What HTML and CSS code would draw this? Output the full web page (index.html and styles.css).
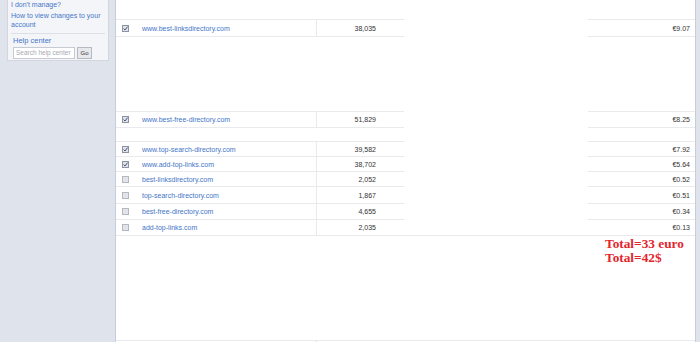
FILE: index.html
```html
<!DOCTYPE html>
<html>
<head>
<meta charset="utf-8">
<link rel="stylesheet" href="styles.css">
</head>
<body>
<div class="page">
  <div class="side">
    <div class="box">
      <a class="slink first">I don't manage?</a>
      <a class="slink">How to view changes to your account</a>
      <div class="sep"></div>
      <a class="slink help">Help center</a>
      <div class="search">
        <span class="input">Search help center</span>
        <span class="go">Go</span>
      </div>
    </div>
  </div>
  <div class="main">
    <div class="sp19"></div>
    <div class="row h18">
      <div class="left">
        <div class="cbcell"><svg class="cb" width="7" height="7" viewBox="0 0 7 7"><rect x="0.5" y="0.5" width="6" height="6" fill="#dfe2ea" stroke="#8d93a2"/><path d="M1.6 3.6 L3 5 L5.6 1.6" fill="none" stroke="#4a5570" stroke-width="1"/></svg></div>
        <a class="url">www.best-linksdirectory.com</a>
        <div class="num">38,035</div>
      </div>
      <div class="gap"></div>
      <div class="right"><span class="price">€9.07</span></div>
    </div>
    <div class="sp74"></div>
    <div class="row h17">
      <div class="left">
        <div class="cbcell"><svg class="cb" width="7" height="7" viewBox="0 0 7 7"><rect x="0.5" y="0.5" width="6" height="6" fill="#dfe2ea" stroke="#8d93a2"/><path d="M1.6 3.6 L3 5 L5.6 1.6" fill="none" stroke="#4a5570" stroke-width="1"/></svg></div>
        <a class="url">www.best-free-directory.com</a>
        <div class="num">51,829</div>
      </div>
      <div class="gap"></div>
      <div class="right"><span class="price">€8.25</span></div>
    </div>
    <div class="sp13"></div>
    <div class="row h16">
      <div class="left">
        <div class="cbcell"><svg class="cb" width="7" height="7" viewBox="0 0 7 7"><rect x="0.5" y="0.5" width="6" height="6" fill="#dfe2ea" stroke="#8d93a2"/><path d="M1.6 3.6 L3 5 L5.6 1.6" fill="none" stroke="#4a5570" stroke-width="1"/></svg></div>
        <a class="url">www.top-search-directory.com</a>
        <div class="num">39,582</div>
      </div>
      <div class="gap"></div>
      <div class="right"><span class="price">€7.92</span></div>
    </div>
    <div class="row h16 next">
      <div class="left">
        <div class="cbcell"><svg class="cb" width="7" height="7" viewBox="0 0 7 7"><rect x="0.5" y="0.5" width="6" height="6" fill="#dfe2ea" stroke="#8d93a2"/><path d="M1.6 3.6 L3 5 L5.6 1.6" fill="none" stroke="#4a5570" stroke-width="1"/></svg></div>
        <a class="url">www.add-top-links.com</a>
        <div class="num">38,702</div>
      </div>
      <div class="gap"></div>
      <div class="right"><span class="price">€5.64</span></div>
    </div>
    <div class="row h16 next">
      <div class="left">
        <div class="cbcell"><svg class="cb" width="7" height="7" viewBox="0 0 7 7"><rect x="0.5" y="0.5" width="6" height="6" fill="#e2e4e9" stroke="#b4b7c0"/></svg></div>
        <a class="url">best-linksdirectory.com</a>
        <div class="num">2,052</div>
      </div>
      <div class="gap"></div>
      <div class="right"><span class="price">€0.52</span></div>
    </div>
    <div class="row h18 next">
      <div class="left">
        <div class="cbcell"><svg class="cb" width="7" height="7" viewBox="0 0 7 7"><rect x="0.5" y="0.5" width="6" height="6" fill="#e2e4e9" stroke="#b4b7c0"/></svg></div>
        <a class="url">top-search-directory.com</a>
        <div class="num">1,867</div>
      </div>
      <div class="gap"></div>
      <div class="right"><span class="price">€0.51</span></div>
    </div>
    <div class="row h17 next">
      <div class="left">
        <div class="cbcell"><svg class="cb" width="7" height="7" viewBox="0 0 7 7"><rect x="0.5" y="0.5" width="6" height="6" fill="#e2e4e9" stroke="#b4b7c0"/></svg></div>
        <a class="url">best-free-directory.com</a>
        <div class="num">4,655</div>
      </div>
      <div class="gap"></div>
      <div class="right"><span class="price">€0.34</span></div>
    </div>
    <div class="row h17 next last">
      <div class="left">
        <div class="cbcell"><svg class="cb" width="7" height="7" viewBox="0 0 7 7"><rect x="0.5" y="0.5" width="6" height="6" fill="#e2e4e9" stroke="#b4b7c0"/></svg></div>
        <a class="url">add-top-links.com</a>
        <div class="num">2,035</div>
      </div>
      <div class="gap"></div>
      <div class="right"><span class="price">€0.13</span></div>
    </div>
    <div class="total">
      <div>Total=33 euro</div>
      <div>Total=42$</div>
    </div>
    <div class="fill"></div>
    <div class="bottom"><div class="tick"></div></div>
  </div>
  <div class="rstrip"></div>
</div>
</body>
</html>
```

FILE: styles.css
```css
* { box-sizing: border-box; }
html, body { margin: 0; padding: 0; }
body {
  width: 700px;
  height: 342px;
  overflow: hidden;
  background: #dfe3ec;
  font-family: "Liberation Sans", Arial, sans-serif;
  font-size: 7px;
}
.page {
  display: flex;
  height: 342px;
}
.side {
  width: 116px;
  flex: none;
  padding-left: 7px;
  border-right: 1px solid #c9cdd8;
}
.box {
  width: 102px;
  height: 61px;
  background: #f4f5f8;
  border: 1px solid #d3d6de;
  border-top: none;
  padding: 0 3px 0 3px;
  display: flex;
  flex-direction: column;
}
.slink {
  color: #4475c8;
  line-height: 9px;
  display: block;
}
.slink.first { margin-bottom: 2px; }
.sep {
  height: 1px;
  background: #dcdfe6;
  margin: 4px 0 2px 0;
}
.slink.help {
  font-size: 7.5px;
  padding-left: 2px;
  line-height: 10px;
}
.search {
  display: flex;
  gap: 2px;
  padding-left: 2px;
  margin-top: 1px;
}
.input {
  width: 62px;
  height: 12px;
  border: 1px solid #c7cad2;
  background: #fff;
  color: #a6a9b0;
  font-size: 6.5px;
  line-height: 10px;
  padding-left: 2px;
  white-space: nowrap;
  overflow: hidden;
}
.go {
  width: 15px;
  height: 12px;
  border: 1px solid #b6b9c1;
  background: #e7e8ec;
  color: #333;
  font-size: 6px;
  line-height: 10px;
  text-align: center;
}
.main {
  width: 579px;
  flex: none;
  background: #fff;
  display: flex;
  flex-direction: column;
}
.rstrip {
  flex: 1;
  background: #dfe3ec;
  border-left: 1px solid #c9cdd8;
}
.sp19 { height: 19px; flex: none; }
.sp74 { height: 74px; flex: none; }
.sp13 { height: 13px; flex: none; }
.row {
  display: flex;
  flex: none;
}
.row.next { margin-top: -1px; }
.h16 { height: 16px; }
.h17 { height: 17px; }
.h18 { height: 18px; }
.left {
  width: 288px;
  display: flex;
  align-items: stretch;
  border-top: 1px solid #e9eaee;
  border-bottom: 1px solid #e9eaee;
}
.gap { width: 184px; }
.row.last .gap { border-bottom: 1px solid #e9eaee; }
.right {
  width: 107px;
  border-top: 1px solid #e9eaee;
  border-bottom: 1px solid #e9eaee;
  display: flex;
  align-items: center;
  justify-content: flex-end;
  padding-right: 5px;
}
.cbcell {
  width: 26px;
  padding-left: 6px;
  display: flex;
  align-items: center;
}
.cb { display: block; }
.url {
  width: 174px;
  color: #4475c8;
  display: flex;
  align-items: center;
  white-space: nowrap;
}
.num {
  width: 88px;
  border-left: 1px solid #e9eaee;
  color: #333;
  display: flex;
  align-items: center;
  justify-content: flex-end;
  padding-right: 28px;
}
.price { color: #333; }
.total {
  flex: none;
  margin-top: 1px;
  padding-left: 489px;
  color: #e3262c;
  font-family: "Liberation Serif", "Times New Roman", serif;
  font-weight: bold;
  font-size: 13.3px;
  line-height: 14px;
}
.fill { flex: 1; }
.bottom {
  flex: none;
  height: 2px;
  border-top: 1px solid #e9eaee;
  padding-left: 200px;
}
.tick {
  width: 1px;
  height: 1px;
  background: #d9dbe0;
}
```
